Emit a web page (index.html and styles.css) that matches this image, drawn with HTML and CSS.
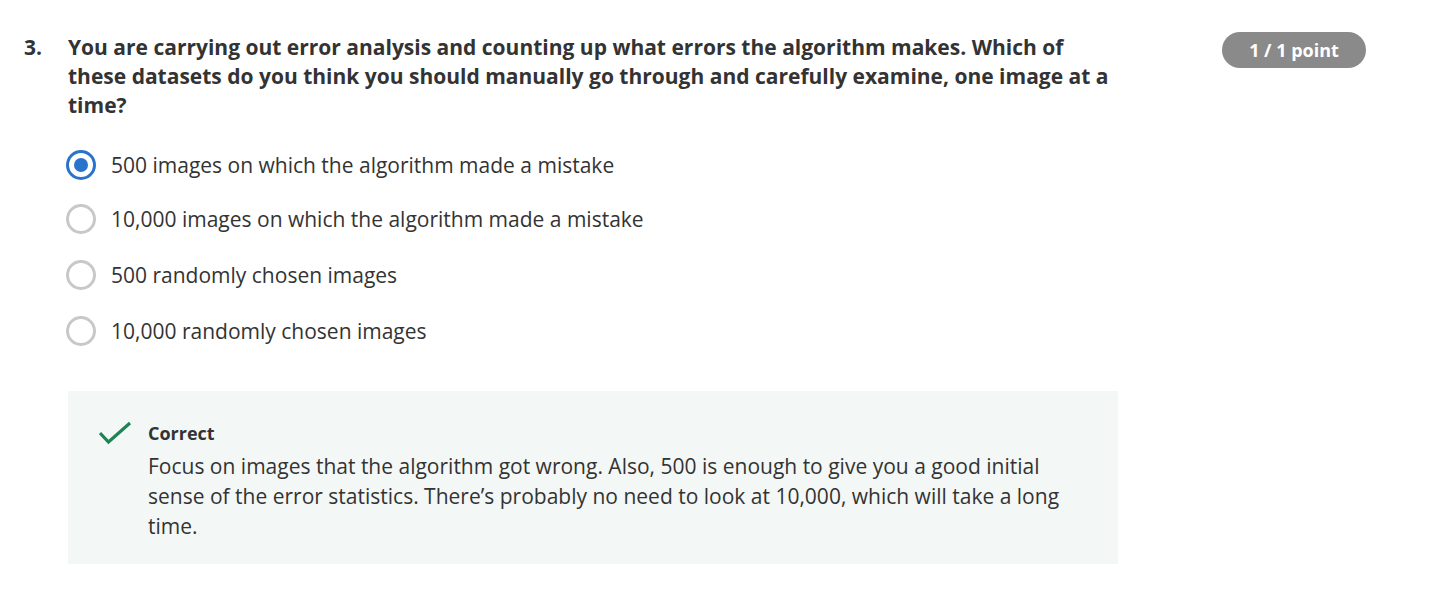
FILE: index.html
```html
<!DOCTYPE html>
<html>
<head>
<meta charset="utf-8">
<link rel="stylesheet" href="styles.css">
</head>
<body>
<div class="page">
  <div class="question">
    <div class="qnum">3.</div>
    <div class="qbody">
      <div class="qtext">You are carrying out error analysis and counting up what errors the algorithm makes. Which of these datasets do you think you should manually go through and carefully examine, one image at a time?</div>
      <div class="options">
        <label class="option">
          <span class="radio checked"><span class="dot"></span></span>
          <span class="otext">500 images on which the algorithm made a mistake</span>
        </label>
        <label class="option">
          <span class="radio"></span>
          <span class="otext">10,000 images on which the algorithm made a mistake</span>
        </label>
        <label class="option">
          <span class="radio"></span>
          <span class="otext">500 randomly chosen images</span>
        </label>
        <label class="option">
          <span class="radio"></span>
          <span class="otext">10,000 randomly chosen images</span>
        </label>
      </div>
      <div class="feedback">
        <svg class="check" width="34" height="28" viewBox="0 0 34 28"><path d="M1 14 L9.5 23 L31 4" fill="none" stroke="#1f8354" stroke-width="3.2"/></svg>
        <div class="fbody">
          <div class="ftitle">Correct</div>
          <div class="ftext">Focus on images that the algorithm got wrong. Also, 500 is enough to give you a good initial sense of the error statistics. There’s probably no need to look at 10,000, which will take a long time.</div>
        </div>
      </div>
    </div>
    <div class="badge">1 / 1 point</div>
  </div>
</div>
</body>
</html>
```

FILE: styles.css
```css
html, body {
  margin: 0;
  padding: 0;
  background: #ffffff;
}
body {
  font-family: "Open Sans", "Noto Sans", sans-serif;
  color: #333333;
}
.page {
  padding: 33px 0 0 24px;
}
.question {
  display: flex;
  align-items: flex-start;
}
.qnum {
  width: 44px;
  font-size: 21px;
  font-weight: 700;
  line-height: 29px;
  color: #333;
}
.qbody {
  width: 1050px;
}
.qtext {
  font-size: 21px;
  font-weight: 700;
  line-height: 29px;
  color: #333;
}
.options {
  display: flex;
  flex-direction: column;
  gap: 26px;
  margin-top: 30px;
}
.option {
  display: flex;
  align-items: center;
  height: 30px;
}
.radio {
  box-sizing: border-box;
  width: 30px;
  height: 30px;
  border-radius: 50%;
  border: 3px solid #c8c8c8;
  display: flex;
  align-items: center;
  justify-content: center;
  flex: none;
  margin-left: -2px;
}
.radio.checked {
  border: 3px solid #2a73cc;
}
.dot {
  width: 14px;
  height: 14px;
  border-radius: 50%;
  background: #2a73cc;
}
.otext {
  font-size: 21px;
  line-height: 30px;
  margin-left: 15px;
  color: #333;
}
.options .option:nth-child(2) { margin-top: -2px; }
.feedback {
  margin-top: 45px;
  background: #f3f8f6;
  height: 173px;
  box-sizing: border-box;
  padding: 30px 32px 0 31px;
  display: flex;
  align-items: flex-start;
}
.check {
  flex: none;
  margin-top: -2px;
}
.fbody {
  margin-left: 15px;
}
.ftitle {
  font-size: 18px;
  font-weight: 700;
  line-height: 24px;
  color: #333;
  margin-bottom: 6px;
}
.ftext {
  font-size: 21px;
  line-height: 30px;
  color: #333;
  width: 930px;
}
.badge {
  margin-left: 104px;
  margin-top: -1px;
  width: 144px;
  height: 36px;
  border-radius: 18px;
  background: #8a8a8a;
  color: #fff;
  font-size: 18px;
  font-weight: 700;
  line-height: 36px;
  text-align: center;
}
```
